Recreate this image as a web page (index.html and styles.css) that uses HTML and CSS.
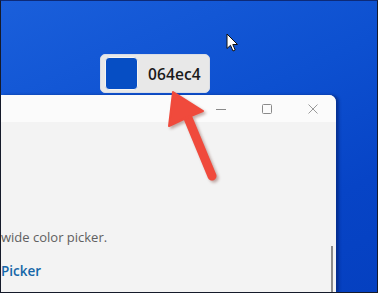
FILE: index.html
```html
<!DOCTYPE html>
<html>
<head>
<meta charset="utf-8">
<link rel="stylesheet" href="styles.css">
</head>
<body>
<div class="desktop">
  <div class="window">
    <div class="titlebar">
      <div class="cap-btn"><svg width="10" height="10" viewBox="0 0 10 10"><path d="M0 5.5H10" stroke="#8a8a8a" stroke-width="1"/></svg></div>
      <div class="cap-btn"><svg width="10" height="10" viewBox="0 0 10 10"><rect x="0.5" y="0.5" width="9" height="9" rx="1" fill="none" stroke="#8a8a8a" stroke-width="1"/></svg></div>
      <div class="cap-btn"><svg width="10" height="10" viewBox="0 0 10 10"><path d="M0.5 0.5L9.5 9.5M9.5 0.5L0.5 9.5" stroke="#9a9a9a" stroke-width="1"/></svg></div>
    </div>
    <div class="content">
      <p class="desc">wide color picker.</p>
      <p class="link">Picker</p>
    </div>
    <div class="scrollbar"></div>
  </div>
  <div class="tooltip">
    <div class="swatch"></div>
    <span class="hex">064ec4</span>
  </div>
  <svg class="cursor" width="14" height="20" viewBox="0 0 14 20"><path d="M1 1L1 15.5L4.5 12.3L7 18L9.2 17L6.8 11.5L11.5 11.5Z" fill="#fff" stroke="#111" stroke-width="1" stroke-linejoin="round"/></svg>
  <svg class="arrow" width="378" height="293" viewBox="0 0 378 293">
    <g class="arrow-shape">
      <path d="M188 118L212 176" stroke="#f04a3c" stroke-width="9" stroke-linecap="round"/>
      <path d="M173 92L169 126L186 118L203 111Z" fill="#f04a3c" stroke="#f04a3c" stroke-width="2" stroke-linejoin="round"/>
    </g>
  </svg>
</div>
</body>
</html>
```
FILE: styles.css
```css
html, body {
  margin: 0;
  padding: 0;
}
body {
  width: 378px;
  height: 293px;
  overflow: hidden;
  font-family: "Open Sans", "Noto Sans", sans-serif;
}
.desktop {
  position: relative;
  box-sizing: border-box;
  width: 378px;
  height: 293px;
  border: 1px solid #151a2a;
  border-top-color: #0d2a78;
  background: linear-gradient(155deg, #1a5fdb 0%, #0d50d0 45%, #0744c6 75%, #0540c0 100%);
  overflow: hidden;
}
.window {
  position: absolute;
  left: 0;
  top: 94px;
  width: 335px;
  bottom: 0;
  background: #f3f3f3;
  border-top-right-radius: 7px;
  box-shadow: 3px 0 3px rgba(0, 20, 80, 0.45);
  display: flex;
  flex-direction: column;
}
.titlebar {
  height: 27px;
  background: #fbfbfb;
  border-top-right-radius: 7px;
  display: flex;
  justify-content: flex-end;
  flex-shrink: 0;
}
.cap-btn {
  width: 46px;
  display: flex;
  align-items: center;
  justify-content: center;
}
.content {
  padding: 106px 0 0 0;
}
.desc {
  margin: 0;
  font-size: 13px;
  line-height: 18px;
  color: #606060;
}
.link {
  margin: 16px 0 0 0;
  font-size: 13.5px;
  line-height: 18px;
  font-weight: 600;
  color: #1566a8;
}
.scrollbar {
  position: absolute;
  left: 330px;
  top: 151px;
  bottom: 0;
  width: 2px;
  background: #8c8c8c;
}
.tooltip {
  position: absolute;
  left: 99px;
  top: 53px;
  width: 110px;
  height: 39px;
  box-sizing: border-box;
  background: #e8e8e8;
  border: 1px solid #d9dde6;
  border-radius: 5px;
  display: flex;
  align-items: center;
  padding-left: 4px;
  gap: 10px;
}
.swatch {
  width: 33px;
  height: 33px;
  box-sizing: border-box;
  background: #064ec4;
  border: 1px solid #f4f4f4;
  border-radius: 4px;
}
.hex {
  font-family: "Open Sans", "Noto Sans", sans-serif;
  font-weight: 600;
  font-size: 15.5px;
  color: #1a1a1a;
  letter-spacing: 0.1px;
}
.cursor {
  position: absolute;
  left: 225px;
  top: 32px;
}
.arrow {
  position: absolute;
  left: -1px;
  top: -1px;
}
.arrow-shape {
  filter: drop-shadow(2px 2px 1.5px rgba(90, 20, 10, 0.35));
}
```
